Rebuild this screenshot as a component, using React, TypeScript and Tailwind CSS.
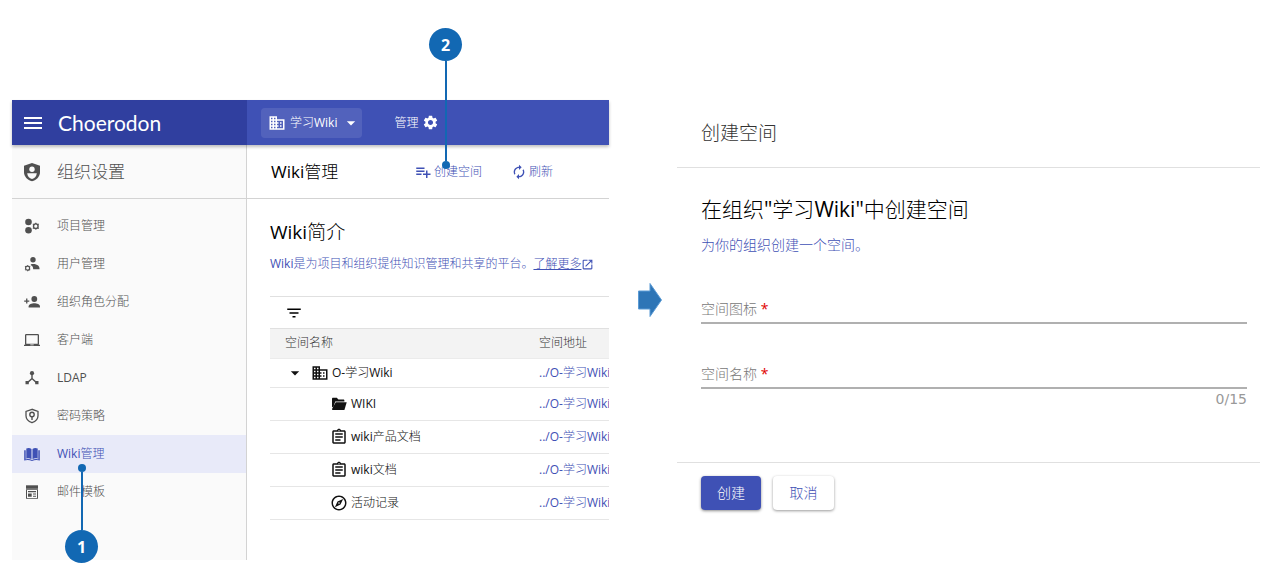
import React from "react";
import {
  MdMenu,
  MdDomain,
  MdSettings,
  MdPlaylistAdd,
  MdAutorenew,
  MdOpenInNew,
  MdFilterList,
  MdOutlineAssignment,
  MdOutlineExplore,
  MdArrowDropDown,
} from "react-icons/md";

type IconProps = { className?: string };

function Svg({ className, children }: IconProps & { children: React.ReactNode }) {
  return (
    <svg viewBox="0 0 16 16" fill="currentColor" className={className} aria-hidden="true">
      {children}
    </svg>
  );
}

function OrgShieldIcon({ className }: IconProps) {
  return (
    <svg viewBox="0 0 18 20" className={className} aria-hidden="true">
      <path fill="currentColor" d="M9 1 1 3.800v6.200c0 4.600 3.400 8 8 9.300 4.600-1.300 8-4.700 8-9.300V3.800z" />
      <circle cx="9" cy="7.200" r="2.700" fill="#fafafa" />
      <path fill="#fafafa" d="M4.200 11.300h9.600c-.2 2.900-2 5-4.800 5.800-2.800-.8-4.600-2.900-4.800-5.800z" />
    </svg>
  );
}

function ProjectIcon({ className }: IconProps) {
  return (
    <Svg className={className}>
      <circle cx="4.500" cy="4" r="3.300" />
      <circle cx="4.500" cy="12.300" r="3.300" />
      <circle cx="11.800" cy="8.200" r="2.300" fill="none" stroke="currentColor" strokeWidth="1.400" />
      <path d="M11.200 4.800h1.200v1.200h-1.200zM11.200 10.400h1.200v1.200h-1.200zM8.500 6.300l.7-.9.900.8-.6.800zM15.100 6.300l-.7-.9-.9.800.6.800zM8.500 10.100l.7.900.9-.8-.6-.8zM15.100 10.100l-.7.900-.9-.8.600-.8z" />
    </Svg>
  );
}

function UserIcon({ className }: IconProps) {
  return (
    <Svg className={className}>
      <circle cx="9" cy="3.800" r="2.700" />
      <path d="M7.500 8h3.200c2.800.7 4.800 2 4.800 4.200v1H9.200C9.200 11 8.400 9.700 6.500 9z" />
      <circle cx="3.600" cy="12.200" r="2" fill="none" stroke="currentColor" strokeWidth="1.200" />
      <path d="M3.100 9.200h1v1h-1zM3.100 14.200h1v1h-1zM.7 10.600l.6-.8.800.7-.6.700zM6.500 10.600l-.6-.8-.8.700.6.700zM.7 13.800l.6.800.8-.7-.6-.7zM6.500 13.800l-.6.800-.8-.7.600-.7z" />
    </Svg>
  );
}

function PersonAddIcon({ className }: IconProps) {
  return (
    <Svg className={className}>
      <circle cx="10.300" cy="5" r="2.900" />
      <path d="M4.600 13.600v-1.200c0-2 3.200-3.200 5.700-3.200s5.700 1.200 5.700 3.200v1.200z" />
      <path d="M2.100 4.500h1.300v1.900h1.900v1.300H3.400v1.900H2.100V7.700H.2V6.400h1.900z" />
    </Svg>
  );
}

function LaptopIcon({ className }: IconProps) {
  return (
    <Svg className={className}>
      <path
        fillRule="evenodd"
        d="M1 3.300C1 2.600 1.500 2 2.200 2h11.600c.7 0 1.200.6 1.200 1.300v8.500c0 .4-.1.700-.3.900H16V14H0v-1.300h1.300c-.2-.2-.3-.5-.3-.9zM2.300 3.300v8.500h11.400V3.300zM6.300 12.500v.8h3.400v-.8z"
      />
    </Svg>
  );
}

function LdapIcon({ className }: IconProps) {
  return (
    <Svg className={className}>
      <circle cx="8" cy="3.200" r="2.100" />
      <path d="M7.300 4h1.400v4.200l4.500 4-1 1L8 9.500l-4.200 3.700-1-1 4.500-4z" />
      <path d="M1.500 11h3.300v3.200H1.500zM11.200 11h3.300v3.200h-3.300z" />
    </Svg>
  );
}

function PasswordIcon({ className }: IconProps) {
  return (
    <Svg className={className}>
      <path
        d="M8 1.300 2 3.500v4.300c0 3.200 2.500 5.700 6 6.900 3.500-1.200 6-3.700 6-6.900V3.500z"
        fill="none"
        stroke="currentColor"
        strokeWidth="1.300"
      />
      <circle cx="8" cy="6.500" r="2.200" fill="none" stroke="currentColor" strokeWidth="1.400" />
      <path d="M7.300 8h1.400v4H7.300z" />
    </Svg>
  );
}

function BookIcon({ className }: IconProps) {
  return (
    <Svg className={className}>
      <path d="M2.300 2.600C4 1.800 6 1.900 7.500 3v10.200C6 12.200 4 12.100 2.300 12.800zM8.500 3C10 1.900 12 1.800 13.700 2.600v10.200c-1.700-.7-3.700-.6-5.200.4z" />
      <path d="M.2 4.300h1.500v9.200c2.200-.7 4.200-.6 6.300.5 2.100-1.100 4.100-1.200 6.300-.5V4.300h1.500v10.300c-2.500-.8-5.200-.7-7.800.4-2.600-1.100-5.300-1.200-7.800-.4z" />
    </Svg>
  );
}

function TemplateIcon({ className }: IconProps) {
  return (
    <Svg className={className}>
      <path d="M2 1.300h12v3.500H2z" />
      <path fillRule="evenodd" d="M2 5.300h12v9.400H2zM3 6v7.900h10V6z" />
      <path d="M4 7h8v1.200H4zM4 9.600h3.700v3.200H4zM9 9.600h3v1H9zM9 11.800h3v1H9z" />
    </Svg>
  );
}

function FolderIcon({ className }: IconProps) {
  return (
    <Svg className={className}>
      <path d="M1 3c0-.7.400-1.200 1.100-1.200h3.700l1.600 1.700h5c.6 0 1 .5 1 1.100v.9H4.200L2.300 11.500 1 10.800z" />
      <path d="M4.700 6.200h11L13.400 14H2.200c-.7 0-1.200-.4-1.200-1.100z" />
    </Svg>
  );
}

const menu = [
  { label: "项目管理", Icon: ProjectIcon },
  { label: "用户管理", Icon: UserIcon },
  { label: "组织角色分配", Icon: PersonAddIcon },
  { label: "客户端", Icon: LaptopIcon },
  { label: "LDAP", Icon: LdapIcon },
  { label: "密码策略", Icon: PasswordIcon },
  { label: "Wiki管理", Icon: BookIcon, active: true },
  { label: "邮件模板", Icon: TemplateIcon },
];

const pages = [
  { name: "WIKI", Icon: FolderIcon },
  { name: "wiki产品文档", Icon: MdOutlineAssignment },
  { name: "wiki文档", Icon: MdOutlineAssignment },
  { name: "活动记录", Icon: MdOutlineExplore },
];

function Badge({ children }: { children: React.ReactNode }) {
  return (
    <span className="flex size-[33px] shrink-0 items-center justify-center rounded-full bg-[#1268b3] text-base font-bold text-white">
      {children}
    </span>
  );
}

function Sidebar() {
  return (
    <aside className="flex w-[235px] shrink-0 flex-col border-r border-[#d3d3d3] bg-[#fafafa] text-[#505050]">
      <h2 className="flex h-[54px] items-center gap-4 border-b border-[#d3d3d3] pl-[11px] text-[17px]">
        <OrgShieldIcon className="h-5 w-[18px]" />
        组织设置
      </h2>
      <nav className="pt-2">
        {menu.map(({ label, Icon, active }) => (
          <a
            key={label}
            href="#"
            className={
              active
                ? "flex h-[38px] items-center gap-[17px] bg-[#e8eaf9] pl-3 text-xs text-[#3f51b5]"
                : "flex h-[38px] items-center gap-[17px] pl-3 text-xs"
            }
          >
            <Icon className="size-4" />
            {label}
          </a>
        ))}
      </nav>
    </aside>
  );
}

function SpaceTable() {
  return (
    <table className="w-full table-fixed border-collapse text-left text-xs">
      <thead>
        <tr className="h-[29px] border-b border-[#ebebeb] bg-[#f3f3f3] text-[#333]">
          <th className="w-[254px] pl-[15px] font-normal">空间名称</th>
          <th className="overflow-hidden pl-[15px] font-normal whitespace-nowrap">空间地址</th>
        </tr>
      </thead>
      <tbody className="text-[#111]">
        <tr className="h-[29px] border-b border-[#e6e6e6]">
          <td className="pl-[15px]">
            <span className="flex items-center">
              <MdArrowDropDown className="mr-[6px] size-5" />
              <MdDomain className="mr-[3px] size-[18px]" />
              O-学习Wiki
            </span>
          </td>
          <td className="overflow-hidden pl-[15px] whitespace-nowrap">
            <a href="#" className="text-[#3f51b5]">../O-学习Wiki</a>
          </td>
        </tr>
        {pages.map(({ name, Icon }) => (
          <tr key={name} className="h-[33px] border-b border-[#e6e6e6]">
            <td className="pl-[60px]">
              <span className="flex items-center gap-[3px]">
                <span className="flex size-[18px] items-center justify-center">
                  <Icon className={Icon === FolderIcon ? "size-4" : "size-[18px]"} />
                </span>
                {name}
              </span>
            </td>
            <td className="overflow-hidden pl-[15px] whitespace-nowrap">
              <a href="#" className="text-[#3f51b5]">../O-学习Wiki</a>
            </td>
          </tr>
        ))}
      </tbody>
    </table>
  );
}

function AdminPanel() {
  return (
    <section className="relative flex min-w-0 flex-[597] flex-col">
      <header className="relative z-10 flex h-[45px] bg-[#3f51b5] text-xs text-white shadow-[0_2px_3px_rgba(0,0,0,0.25)]">
        <div className="flex w-[235px] shrink-0 items-center bg-[#303f9f] pl-[9px]">
          <button type="button" aria-label="菜单" className="mr-[13px]">
            <MdMenu className="size-6" />
          </button>
          <span className="font-['Lato'] text-[21px]">Choerodon</span>
        </div>
        <div className="flex items-center pl-[14px]">
          <button type="button" className="mr-8 flex h-[30px] items-center rounded-sm bg-white/10 pr-[1px] pl-[7px]">
            <MdDomain className="mr-1 size-[18px]" />
            学习Wiki
            <MdArrowDropDown className="ml-1 size-5" />
          </button>
          <button type="button" className="flex items-center gap-1">
            管理
            <MdSettings className="size-[17px]" />
          </button>
        </div>
      </header>
      <div className="flex min-h-[415px]">
        <Sidebar />
        <main className="min-w-0 flex-1">
          <div className="flex h-[54px] items-center border-b border-[#d3d3d3] pl-6 whitespace-nowrap text-[#3f51b5]">
            <h1 className="w-[143px] text-[17px] text-black">Wiki管理</h1>
            <button type="button" className="flex w-[97px] items-center gap-[2px] text-xs">
              <MdPlaylistAdd className="size-[18px]" />
              创建空间
            </button>
            <button type="button" className="flex items-center gap-[2px] text-xs">
              <MdAutorenew className="size-4" />
              刷新
            </button>
          </div>
          <div className="overflow-hidden pt-5 pl-[23px]">
            <h2 className="text-[19px] leading-[26px] text-black">
              <span className="font-medium">Wiki</span>简介
            </h2>
            <p className="mt-[9px] mb-[22px] flex items-center text-xs leading-5 whitespace-nowrap text-[#3f51b5]">
              Wiki是为项目和组织提供知识管理和共享的平台。
              <a href="#" className="flex items-center underline">
                了解更多
                <MdOpenInNew className="size-[13px]" />
              </a>
            </p>
            <div className="flex h-[33px] items-center border-y border-[#e0e0e0] pl-[15px]">
              <button type="button" aria-label="筛选">
                <MdFilterList className="size-[18px]" />
              </button>
            </div>
            <SpaceTable />
          </div>
        </main>
      </div>

      <div className="absolute top-[364px] left-[53px] z-20 flex flex-col items-center">
        <span className="size-2 rounded-full bg-[#1268b3]" />
        <span className="h-[58px] w-[2px] bg-[#1268b3]" />
        <Badge>1</Badge>
      </div>
      <div className="absolute top-[-72px] left-[417px] z-20 flex flex-col items-center">
        <Badge>2</Badge>
        <span className="h-[100px] w-[2px] bg-[#1268b3]" />
        <span className="size-2 rounded-full bg-[#1268b3]" />
      </div>
    </section>
  );
}

function Field({ id, label }: { id: string; label: string }) {
  return (
    <div className="flex h-7 items-center border-b-2 border-[#b0b0b0] text-sm text-[#777]">
      <label htmlFor={id} className="shrink-0">
        {label} <span className="text-[#e00000]">*</span>
      </label>
      <input id={id} type="text" maxLength={15} className="ml-2 min-w-0 flex-1 outline-none" />
    </div>
  );
}

function CreatePanel() {
  return (
    <section className="min-w-0 flex-[583]">
      <h2 className="flex h-[68px] items-center border-b border-[#e0e0e0] pl-6 text-[19px] text-[#333]">创建空间</h2>
      <form>
        <div className="h-[294px] pt-[27px] pr-[13px] pl-6">
          <h3 className="text-[21px] leading-7 text-black">
            在组织"学习<span className="font-medium">Wiki</span>"中创建空间
          </h3>
          <p className="mt-3 mb-[41px] text-sm leading-5 text-[#3f51b5]">为你的组织创建一个空间。</p>
          <Field id="space-icon" label="空间图标" />
          <div className="h-[37px]" />
          <Field id="space-name" label="空间名称" />
          <p className="text-right font-['DejaVu_Sans'] text-sm leading-5 text-[#999]">0/15</p>
        </div>
        <div className="flex gap-3 border-t border-[#e0e0e0] pt-[13px] pl-6 text-sm">
          <button
            type="button"
            className="h-[34px] w-[60px] rounded-sm bg-[#3f51b5] text-white shadow-[0_1px_3px_rgba(0,0,0,0.45)]"
          >
            创建
          </button>
          <button
            type="button"
            className="h-[34px] w-[61px] rounded-sm bg-white text-[#3f51b5] shadow-[0_1px_3px_rgba(0,0,0,0.4)]"
          >
            取消
          </button>
        </div>
      </form>
    </section>
  );
}

export default function App() {
  return (
    <div className="flex items-start bg-white pt-[100px] pr-1 pb-[26px] pl-3 font-['Open_Sans','Noto_Sans_CJK_SC_Light','Noto_Sans_CJK_SC',sans-serif] font-normal">
      <AdminPanel />
      <div className="w-[68px] shrink-0 pt-[182px] pl-[29px]">
        <svg viewBox="0 0 24 36" className="h-9 w-6" aria-hidden="true">
          <path d="M.5 9H12V1.500L23.500 18 12 34.500V27H.5z" fill="#2e75b6" stroke="#5b9bd5" />
        </svg>
      </div>
      <CreatePanel />
    </div>
  );
}
